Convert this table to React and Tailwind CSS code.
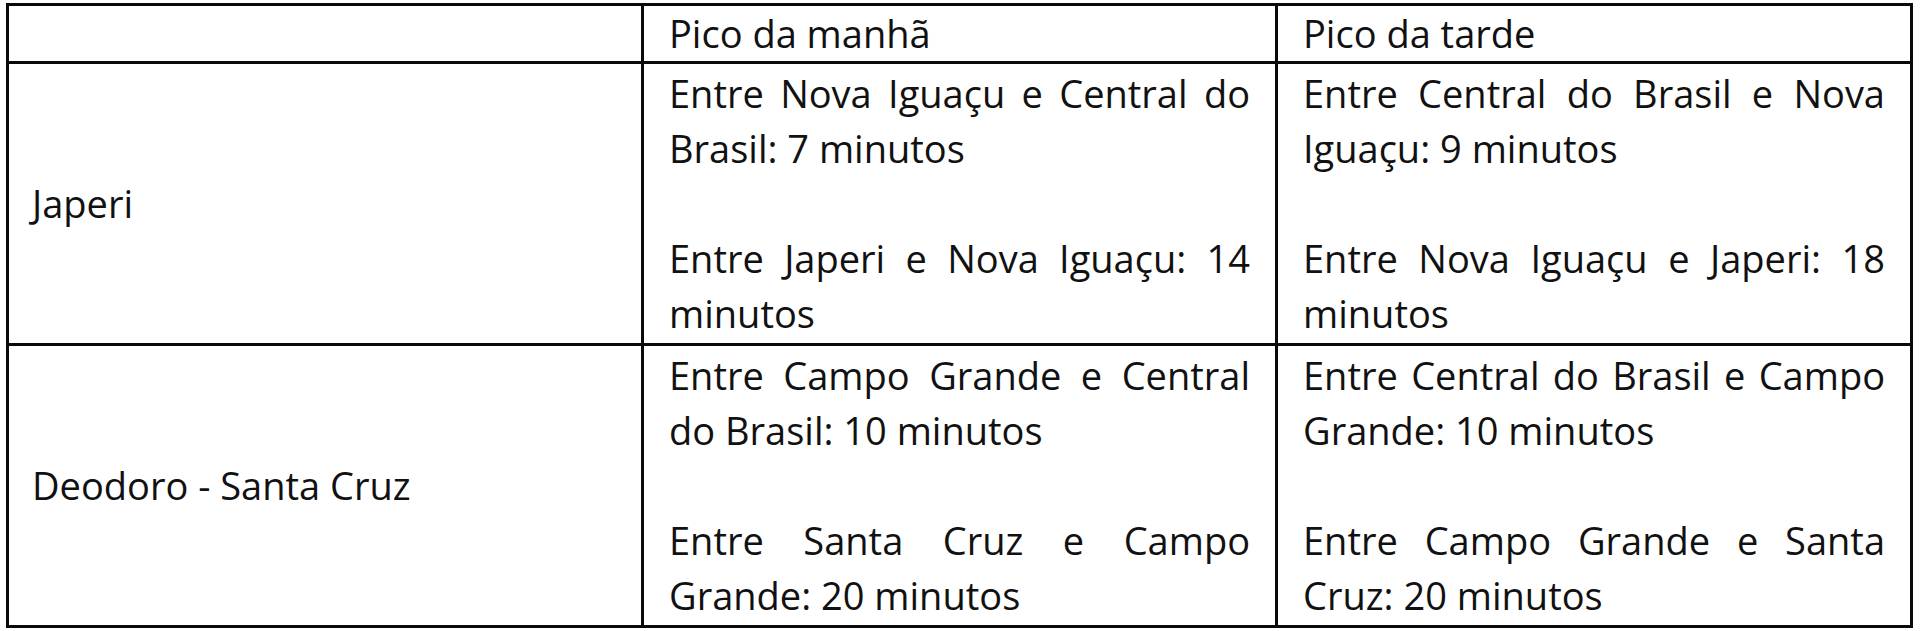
import React from 'react'

const rows = [
  {
    name: "Japeri",
    manha: [
      ["Entre Nova Iguaçu e Central do", true],
      ["Brasil: 7 minutos", false],
      ["", false],
      ["Entre Japeri e Nova Iguaçu: 14", true],
      ["minutos", false],
    ],
    tarde: [
      ["Entre Central do Brasil e Nova", true],
      ["Iguaçu: 9 minutos", false],
      ["", false],
      ["Entre Nova Iguaçu e Japeri: 18", true],
      ["minutos", false],
    ],
  },
  {
    name: "Deodoro - Santa Cruz",
    manha: [
      ["Entre Campo Grande e Central", true],
      ["do Brasil: 10 minutos", false],
      ["", false],
      ["Entre Santa Cruz e Campo", true],
      ["Grande: 20 minutos", false],
    ],
    tarde: [
      ["Entre Central do Brasil e Campo", true],
      ["Grande: 10 minutos", false],
      ["", false],
      ["Entre Campo Grande e Santa", true],
      ["Cruz: 20 minutos", false],
    ],
  },
];

// one div per printed line so the justified ones keep their breaks
const Lines = ({ lines }) => (
  <div className="bg-white px-[25px] pt-[2px]">
    {lines.map(([text, justify], i) => (
      <div
        key={i}
        className={
          justify
            ? "h-[55px] whitespace-nowrap text-justify [text-align-last:justify]"
            : "h-[55px] whitespace-nowrap"
        }
      >
        {text}
      </div>
    ))}
  </div>
);

const App = () => {
  return (
    <div className="min-h-[631px] bg-white pl-[6px] pt-[3px]">
      <div
        className="grid w-[1907px] grid-cols-[632px_631px_632px] grid-rows-[55px_279px_279px] gap-[3px] bg-[#0a0a0a] p-[3px] text-[38px] leading-[55px] text-[#111111]"
        style={{ fontFamily: "'Open Sans', 'Noto Sans', sans-serif" }}
      >
        {/* header */}
        <div className="bg-white"></div>
        <div className="bg-white px-[25px]">Pico da manhã</div>
        <div className="bg-white px-[25px]">Pico da tarde</div>

        {rows.map((row) => (
          <React.Fragment key={row.name}>
            <div className="flex items-center bg-white pl-[23px]">{row.name}</div>
            <Lines lines={row.manha} />
            <Lines lines={row.tarde} />
          </React.Fragment>
        ))}
      </div>
    </div>
  )
}

export default App
